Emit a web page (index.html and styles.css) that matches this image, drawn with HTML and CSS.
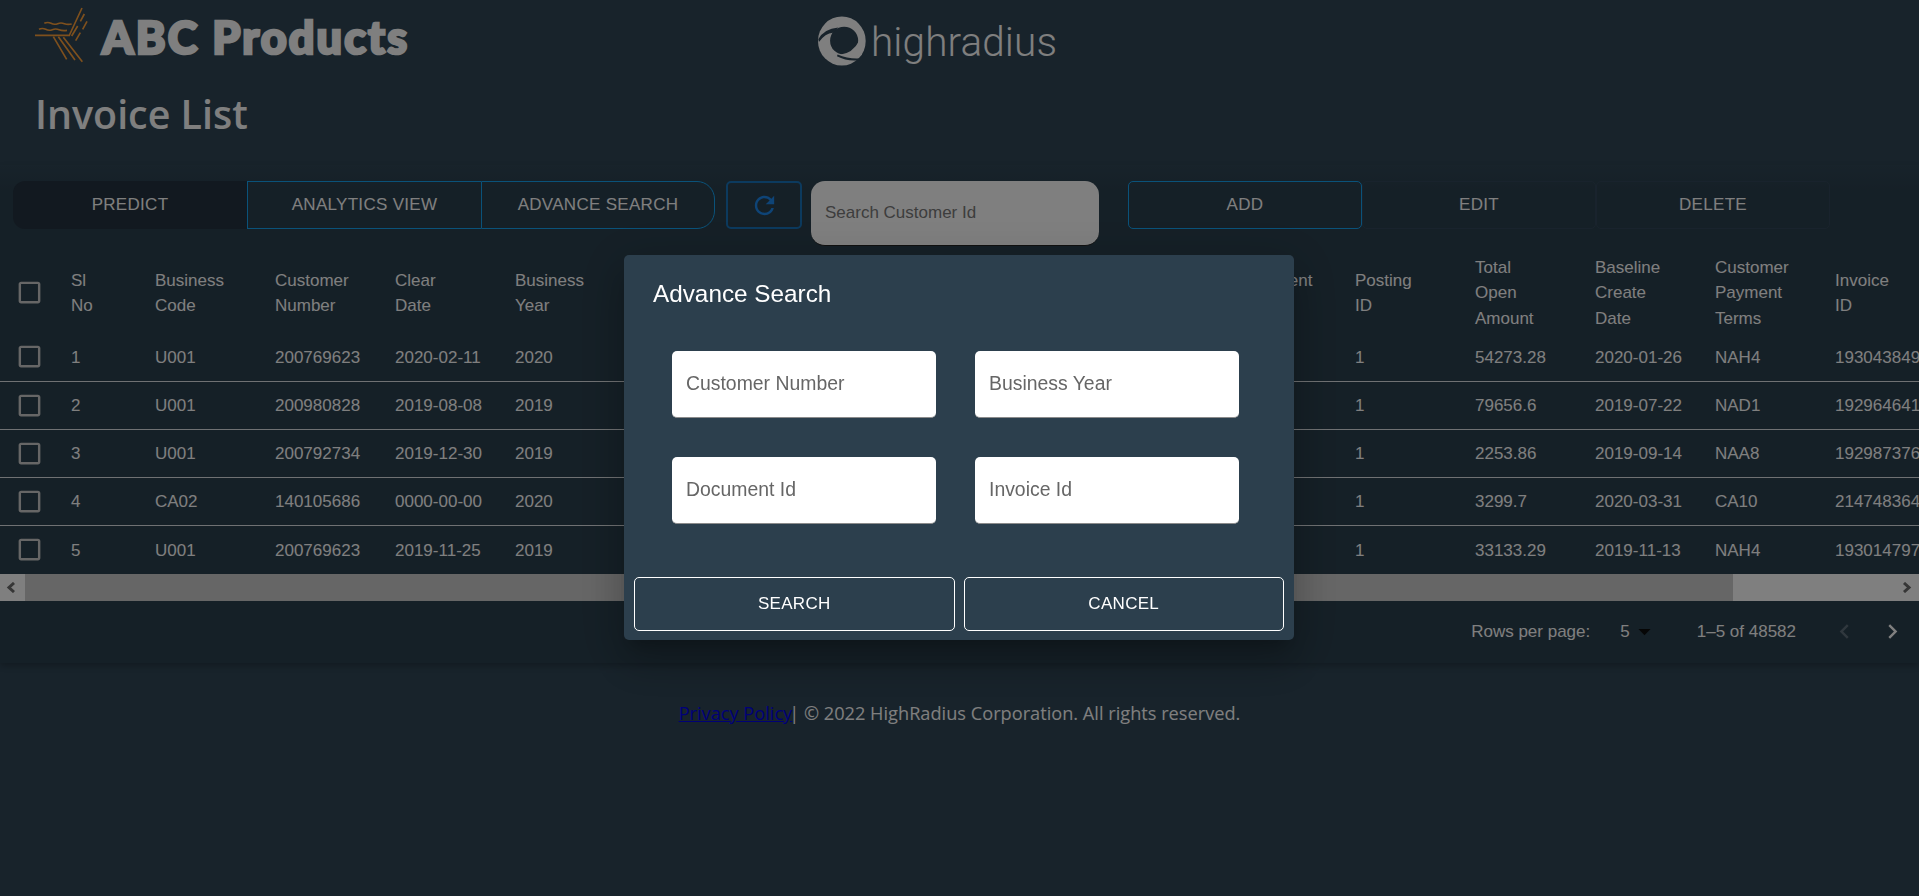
FILE: index.html
```html
<!DOCTYPE html>
<html lang="en">
<head>
<meta charset="utf-8">
<title>Invoice List</title>
<link rel="stylesheet" href="styles.css">
</head>
<body>
<header class="brandbar">
  <div class="abc">
    <svg class="abc-mark" viewBox="0 0 360 210" aria-hidden="true">
      <g fill="none" stroke="#fda03a" stroke-width="5">
        <path d="M186 24 147 108M45 106H150"/>
        <path d="M73 70q10-5 20 0t20 1 20 0 22 1M57 88q10-5 20 0t20 1 20 0 24 2"/>
        <path d="M193 42 181 64M173 78 155 108M201 64 188 88M181 98 167 122" />
        <path d="M100 110 140 178M115 110 165 180M130 112 187 185"/>
      </g>
    </svg>
    <span class="abc-name">ABC Products</span>
  </div>
  <div class="hr">
    <svg class="hr-mark" viewBox="0 0 150 150" aria-hidden="true">
      <ellipse cx="73" cy="75" rx="73" ry="75" fill="#fff"/>
      <circle cx="80" cy="74" r="43" fill="#304656"/>
      <path d="M1 70Q18 38 62 34L46 50Q22 52 3 78Z" fill="#304656"/>
      <path d="M64 118Q108 112 126 74L134 118Q100 128 64 118Z" fill="#fff"/>
      <path d="M60 116Q92 130 128 128L126 134Q88 138 58 122Z" fill="#304656"/>
    </svg>
    <span class="hr-name">highradius</span>
  </div>
</header>
<h1 class="page-title">Invoice List</h1>
<main class="card">
  <div class="toolbar">
    <button class="tb tb-predict">PREDICT</button>
    <button class="tb tb-blue tb-analytics">ANALYTICS VIEW</button>
    <button class="tb tb-blue tb-advance">ADVANCE SEARCH</button>
    <button class="tb-refresh" aria-label="Refresh">
      <svg viewBox="0 0 24 24" class="refresh-icon"><path d="M17.65 6.35C16.2 4.9 14.21 4 12 4c-4.42 0-7.99 3.58-7.99 8s3.57 8 7.99 8c3.73 0 6.84-2.55 7.73-6h-2.08c-.82 2.33-3.04 4-5.65 4-3.31 0-6-2.69-6-6s2.69-6 6-6c1.66 0 3.14.69 4.22 1.78L13 11h7V4l-2.35 2.35z"/></svg>
    </button>
    <div class="search"><span>Search Customer Id</span></div>
    <button class="tb tb-blue tb-add">ADD</button>
    <button class="tb tb-dim">EDIT</button>
    <button class="tb tb-dim">DELETE</button>
  </div>
  <div class="table-wrap">
    <table class="grid">
      <colgroup><col class="c-check"><col class="c-sl"><col span="15" class="c-std"></colgroup>
      <thead>
        <tr>
          <th class="check"><svg viewBox="0 0 24 24" class="cb"><path d="M19 5v14H5V5h14m0-2H5c-1.1 0-2 .9-2 2v14c0 1.1.9 2 2 2h14c1.1 0 2-.9 2-2V5c0-1.1-.9-2-2-2z"/></svg></th>
          <th>Sl<br>No</th><th>Business<br>Code</th><th>Customer<br>Number</th><th>Clear<br>Date</th><th>Business<br>Year</th><th>Document<br>Id</th><th>Posting<br>Date</th><th>Document<br>Create<br>Date</th><th>Due<br>Date</th><th>Invoice<br>Currency</th><th>Document<br>Type</th><th>Posting<br>ID</th><th>Total<br>Open<br>Amount</th><th>Baseline<br>Create<br>Date</th><th>Customer<br>Payment<br>Terms</th><th>Invoice<br>ID</th>
        </tr>
      </thead>
      <tbody>
        <tr>
          <td class="check"><svg viewBox="0 0 24 24" class="cb"><path d="M19 5v14H5V5h14m0-2H5c-1.1 0-2 .9-2 2v14c0 1.1.9 2 2 2h14c1.1 0 2-.9 2-2V5c0-1.1-.9-2-2-2z"/></svg></td>
          <td>1</td><td>U001</td><td>200769623</td><td>2020-02-11</td><td>2020</td><td>1930438491</td><td>2020-01-26</td><td>2020-01-25</td><td>2020-02-10</td><td>USD</td><td>RV</td><td>1</td><td>54273.28</td><td>2020-01-26</td><td>NAH4</td><td>1930438491</td>
        </tr>
        <tr>
          <td class="check"><svg viewBox="0 0 24 24" class="cb"><path d="M19 5v14H5V5h14m0-2H5c-1.1 0-2 .9-2 2v14c0 1.1.9 2 2 2h14c1.1 0 2-.9 2-2V5c0-1.1-.9-2-2-2z"/></svg></td>
          <td>2</td><td>U001</td><td>200980828</td><td>2019-08-08</td><td>2019</td><td>1929646410</td><td>2019-07-22</td><td>2019-07-22</td><td>2019-08-11</td><td>USD</td><td>RV</td><td>1</td><td>79656.6</td><td>2019-07-22</td><td>NAD1</td><td>1929646410</td>
        </tr>
        <tr>
          <td class="check"><svg viewBox="0 0 24 24" class="cb"><path d="M19 5v14H5V5h14m0-2H5c-1.1 0-2 .9-2 2v14c0 1.1.9 2 2 2h14c1.1 0 2-.9 2-2V5c0-1.1-.9-2-2-2z"/></svg></td>
          <td>3</td><td>U001</td><td>200792734</td><td>2019-12-30</td><td>2019</td><td>1929873765</td><td>2019-09-14</td><td>2019-09-14</td><td>2019-09-29</td><td>USD</td><td>RV</td><td>1</td><td>2253.86</td><td>2019-09-14</td><td>NAA8</td><td>1929873765</td>
        </tr>
        <tr>
          <td class="check"><svg viewBox="0 0 24 24" class="cb"><path d="M19 5v14H5V5h14m0-2H5c-1.1 0-2 .9-2 2v14c0 1.1.9 2 2 2h14c1.1 0 2-.9 2-2V5c0-1.1-.9-2-2-2z"/></svg></td>
          <td>4</td><td>CA02</td><td>140105686</td><td>0000-00-00</td><td>2020</td><td>2960623488</td><td>2020-03-30</td><td>2020-03-30</td><td>2020-04-10</td><td>CAD</td><td>RV</td><td>1</td><td>3299.7</td><td>2020-03-31</td><td>CA10</td><td>2147483647</td>
        </tr>
        <tr>
          <td class="check"><svg viewBox="0 0 24 24" class="cb"><path d="M19 5v14H5V5h14m0-2H5c-1.1 0-2 .9-2 2v14c0 1.1.9 2 2 2h14c1.1 0 2-.9 2-2V5c0-1.1-.9-2-2-2z"/></svg></td>
          <td>5</td><td>U001</td><td>200769623</td><td>2019-11-25</td><td>2019</td><td>1930147974</td><td>2019-11-13</td><td>2019-11-13</td><td>2019-11-28</td><td>USD</td><td>RV</td><td>1</td><td>33133.29</td><td>2019-11-13</td><td>NAH4</td><td>1930147974</td>
        </tr>
      </tbody>
    </table>
  </div>
  <div class="scrollbar">
    <span class="sb-btn"><svg viewBox="0 0 11 11" class="sb-arrow"><path d="M8 1 3 5.5 8 10"/></svg></span>
    <span class="sb-thumb"></span>
    <span class="sb-track"><svg viewBox="0 0 11 11" class="sb-arrow"><path d="M3 1 8 5.5 3 10"/></svg></span>
  </div>
  <div class="pager">
    <span>Rows per page:</span>
    <span class="pg-size">5</span>
    <svg viewBox="0 0 24 24" class="pg-drop"><path d="M7 10l5 5 5-5z"/></svg>
    <span class="pg-range">1–5 of 48582</span>
    <svg viewBox="0 0 24 24" class="pg-nav pg-prev"><path d="M15.41 7.41 14 6l-6 6 6 6 1.41-1.41L10.83 12z"/></svg>
    <svg viewBox="0 0 24 24" class="pg-nav pg-next"><path d="M10 6 8.59 7.41 13.17 12l-4.58 4.59L10 18l6-6z"/></svg>
  </div>
</main>
<footer class="legal"><a href="#" class="legal-link">Privacy Policy</a>| © 2022 HighRadius Corporation. All rights reserved.</footer>

<div class="backdrop">
  <section class="modal">
    <h2 class="modal-title">Advance Search</h2>
    <div class="fields">
      <div class="field">Customer Number</div>
      <div class="field">Business Year</div>
      <div class="field">Document Id</div>
      <div class="field">Invoice Id</div>
    </div>
    <div class="actions">
      <button class="action">SEARCH</button>
      <button class="action">CANCEL</button>
    </div>
  </section>
</div>
</body>
</html>
```
FILE: styles.css
```css
* { box-sizing: border-box; }
html, body { margin: 0; height: 100%; overflow: hidden; }
body {
  background: #304656;
  color: #fff;
  font-family: "Liberation Sans", Arial, sans-serif;
  font-size: 17px;
}
button { font: inherit; color: inherit; background: none; cursor: pointer; }

/* brand bar */
.brandbar { display: flex; height: 70px; }
.abc { display: flex; width: 818px; padding-left: 20px; }
.abc-mark { width: 120px; height: 70px; margin-right: -38px; flex: none; }
.abc-name {
  font-family: Lato, "Liberation Sans", sans-serif;
  font-weight: 900;
  font-size: 45px;
  line-height: 74px;
  letter-spacing: 2.1px;
  -webkit-text-stroke: 2.6px #fff;
  white-space: nowrap;
}
.hr { display: flex; align-items: flex-start; }
.hr-mark { width: 49px; height: 50px; margin-top: 16px; flex: none; }
.hr-name {
  font-family: Roboto, "Open Sans", sans-serif;
  font-weight: 300;
  font-size: 40.5px;
  line-height: 54px;
  margin: 15px 0 0 4px;
  letter-spacing: .1px;
}

.page-title {
  margin: 0;
  padding-left: 35px;
  height: 95px;
  font-family: "Open Sans", sans-serif;
  font-weight: 600;
  font-size: 39.4px;
  line-height: 88px;
}

/* card */
.card {
  background: linear-gradient(#304656, #2b404e 26px);
  padding-top: 16px;
  height: 498px;
  box-shadow: 0 3px 6px rgba(0,0,0,.22);
}
.toolbar { display: flex; align-items: flex-start; padding-left: 13px; height: 70px; }
.tb {
  width: 234px;
  height: 48px;
  padding: 0;
  border: 1px solid transparent;
  letter-spacing: .3px;
  background: none;
}
.tb-predict { background: #243240; border-radius: 12px 0 0 12px; }
.tb-blue { border-color: #14a5f5; }
.tb-analytics { border-right-width: 0; }
.tb-advance { border-radius: 0 18px 18px 0; }
.tb-refresh {
  width: 76px;
  height: 48px;
  margin: 0 9px 0 11px;
  padding: 0;
  border: 2px solid #1874bc;
  border-radius: 5px;
  display: flex;
  align-items: center;
  justify-content: center;
}
.refresh-icon { width: 29px; height: 29px; fill: #1c88ee; }
.search {
  width: 288px;
  height: 65px;
  margin-right: 29px;
  padding: 22px 14px 0;
  background: #fff;
  border-radius: 14px;
  border-bottom: 1px solid #222;
  color: #7a7a7a;
}
.tb-add { border-radius: 5px; }
.tb-dim { border-color: #33475a; border-radius: 5px; }

/* table */
.table-wrap { overflow: hidden; }
.grid { border-collapse: collapse; table-layout: fixed; width: 1939px; }
.c-check { width: 55px; }
.c-sl { width: 84px; }
.c-std { width: 120px; }
.grid th, .grid td {
  padding: 1px 0 0 16px;
  text-align: left;
  font-weight: 400;
  line-height: 25.5px;
}
.grid th { padding-top: 2px; }
.grid thead tr { height: 82px; }
.grid tbody tr { height: 48px; border-bottom: 1px solid #dfe3e6; }
.grid tbody tr:last-child { border-bottom: 0; height: 49px; }
.grid th.check, .grid td.check { padding: 0 0 0 15px; line-height: 0; }
.cb { width: 29px; height: 29px; fill: #ccc; }

/* horizontal scrollbar */
.scrollbar { display: flex; height: 27px; background: #fff; }
.sb-btn { width: 25px; display: flex; align-items: center; padding-left: 6px; }
.sb-thumb { width: 1708px; background: #ccc; }
.sb-track { flex: 1; display: flex; align-items: center; justify-content: flex-end; padding-right: 7px; }
.sb-arrow { width: 11px; height: 11px; fill: none; stroke: #6c6c6c; stroke-width: 3; }

/* pagination */
.pager { display: flex; align-items: center; justify-content: flex-end; height: 61px; padding-right: 12px; }
.pg-size { margin-left: 30px; }
.pg-drop { width: 29px; height: 29px; fill: #0c0c0c; }
.pg-range { margin-left: 38px; }
.pg-nav { width: 29px; height: 29px; fill: #fff; }
.pg-prev { margin-left: 34px; margin-right: 19px; fill: #60707c; }

/* footer */
.legal {
  margin-top: 36px;
  text-align: center;
  font-family: "Open Sans", sans-serif;
  font-size: 18.2px;
  line-height: 28px;
}
.legal-link { margin-right: -3px; }

/* dialog */
.backdrop {
  position: fixed;
  inset: 0;
  background: rgba(0,0,0,.5);
  display: flex;
  align-items: flex-start;
  justify-content: center;
  padding: 255px 1px 0 0;
}
.modal {
  width: 670px;
  height: 385px;
  padding: 10px 10px 9px;
  background: #2c3f4d;
  border-radius: 5px;
  box-shadow: 0 11px 15px -7px rgba(0,0,0,.2), 0 24px 38px 3px rgba(0,0,0,.14), 0 9px 46px 8px rgba(0,0,0,.12);
  display: flex;
  flex-direction: column;
}
.modal-title {
  margin: 0;
  padding: 15px 0 0 19px;
  font-weight: 400;
  font-size: 24.3px;
  line-height: 28px;
  height: 86px;
}
.fields {
  display: grid;
  grid-template-columns: 264px 264px;
  column-gap: 39px;
  row-gap: 39px;
  padding-left: 38px;
}
.field {
  height: 67px;
  padding: 18px 14px 0;
  background: #fff;
  border-radius: 5px;
  border-bottom: 1px solid #8b8b8b;
  color: #666;
  font-size: 19.4px;
  line-height: 28px;
}
.actions { display: flex; gap: 9px; margin-top: auto; }
.action {
  flex: 1;
  height: 54px;
  border: 1px solid #fff;
  border-radius: 5px;
  letter-spacing: .3px;
}
```
